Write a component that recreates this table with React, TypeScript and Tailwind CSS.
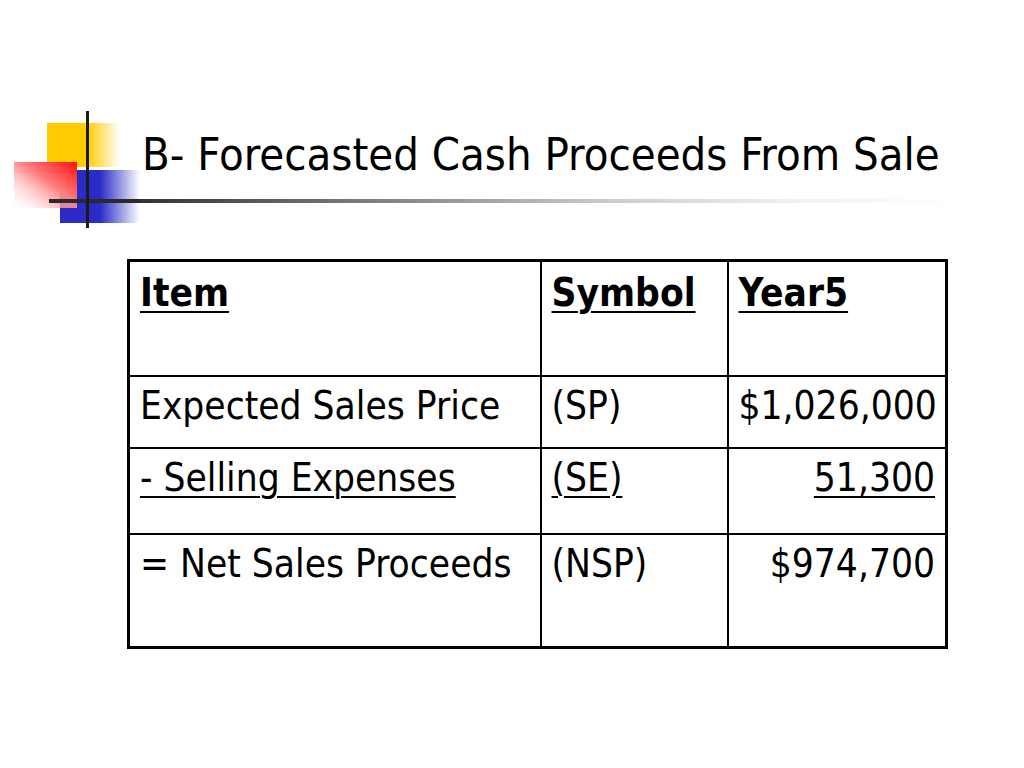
const rows = [
  { item: 'Expected Sales Price', sym: '(SP)', val: '$1,026,000', under: false, h: 'h-[72px]' },
  { item: '- Selling Expenses', sym: '(SE)', val: '51,300', under: true, h: 'h-[86px]' },
  { item: '= Net Sales Proceeds', sym: '(NSP)', val: '$974,700', under: false, h: 'h-[114px]' },
]

function Logo() {
  return (
    <svg width="140" height="140" viewBox="0 0 140 140" className="shrink-0">
      <defs>
        <linearGradient id="yel" x1="0" y1="0" x2="1" y2="0">
          <stop offset="0" stopColor="#ffcc00" />
          <stop offset="0.55" stopColor="#ffcc00" />
          <stop offset="1" stopColor="#ffcc00" stopOpacity="0" />
        </linearGradient>
        <linearGradient id="blu" x1="0" y1="0" x2="1" y2="0">
          <stop offset="0" stopColor="#2b2bc8" />
          <stop offset="0.5" stopColor="#2b2bc8" />
          <stop offset="1" stopColor="#2b2bc8" stopOpacity="0" />
        </linearGradient>
        <linearGradient id="red" x1="1" y1="0" x2="0" y2="1">
          <stop offset="0" stopColor="#ff1010" />
          <stop offset="0.45" stopColor="#ff8081" />
          <stop offset="1" stopColor="#ffffff" stopOpacity="0.2" />
        </linearGradient>
      </defs>
      <rect x="47" y="23" width="73" height="44" fill="url(#yel)" />
      <rect x="60" y="70" width="80" height="53" fill="url(#blu)" />
      <rect x="14" y="62" width="63" height="46" fill="url(#red)" />
      <rect x="49" y="99" width="91" height="4" fill="#2a2a2a" />
      <rect x="86" y="11" width="3" height="117" fill="#1a1a1a" />
    </svg>
  )
}

const cell = 'border-2 border-black align-top px-[10px] whitespace-nowrap'
const ul = 'underline decoration-2 underline-offset-[5px]'

export default function App() {
  return (
    <div className="w-[1024px] h-[768px] bg-white text-black overflow-hidden" style={{ fontFamily: '"DejaVu Sans Condensed", "DejaVu Sans", Tahoma, sans-serif' }}>
      <div className="flex pt-[100px]">
        <Logo />
        <div className="flex flex-col">
          <h1 className="pt-[28px] pl-[2px] text-[45px] leading-[54px] font-normal whitespace-nowrap">B- Forecasted Cash Proceeds From Sale</h1>
          <div className="mt-[17px] h-[4px] w-[820px] bg-[linear-gradient(to_right,#333_0px,#ccc_470px,#f2f2f2_660px,#ffffff_820px)]" />
        </div>
      </div>

      <div className="pl-[127px] pt-[19px]">
        <table className="table-fixed w-[818px] border-collapse border-[3px] border-black text-[38.5px] leading-[46px]">
          <colgroup>
            <col className="w-[412px]" />
            <col className="w-[187px]" />
            <col className="w-[219px]" />
          </colgroup>
          <tbody>
            <tr className="h-[115px]">
              <td className={`${cell} pt-[8px] font-bold ${ul}`}>Item</td>
              <td className={`${cell} pt-[8px] font-bold ${ul}`}>Symbol</td>
              <td className={`${cell} pt-[8px] font-bold ${ul}`}>Year5</td>
            </tr>
            {rows.map((r) => (
              <tr key={r.item} className={r.h}>
                <td className={`${cell} pt-[6px] ${r.under ? ul : ''}`}>{r.item}</td>
                <td className={`${cell} pt-[6px] ${r.under ? ul : ''}`}>{r.sym}</td>
                <td className={`${cell} pt-[6px] text-right ${r.under ? ul : ''}`}>{r.val}</td>
              </tr>
            ))}
          </tbody>
        </table>
      </div>
    </div>
  )
}
